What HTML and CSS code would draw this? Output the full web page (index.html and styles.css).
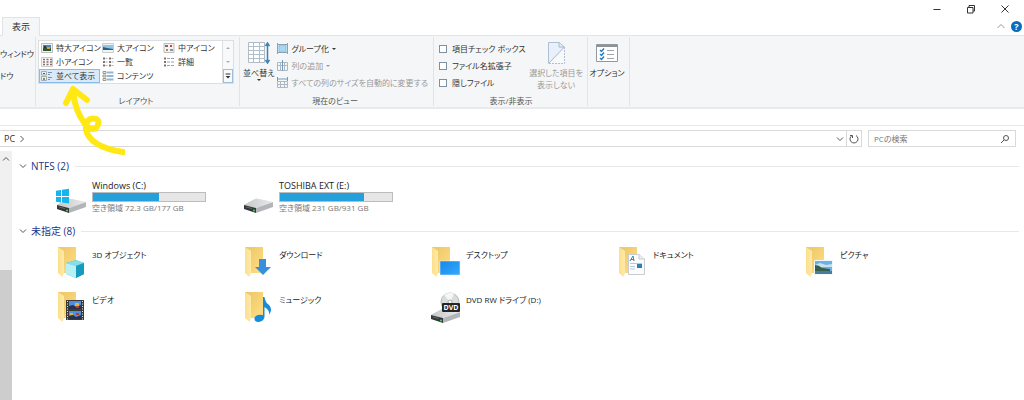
FILE: index.html
```html
<!DOCTYPE html>
<html lang="ja">
<head>
<meta charset="utf-8">
<title>PC</title>
<link rel="stylesheet" href="styles.css">
</head>
<body>
<svg class="defs" aria-hidden="true">
  <defs>
    <linearGradient id="flap" x1="0" x2="1"><stop offset="0" stop-color="#fbdf8c"/><stop offset="1" stop-color="#ffeaa9"/></linearGradient>
    <linearGradient id="back" x1="0" x2="1" y2="1"><stop offset="0" stop-color="#ecc566"/><stop offset="1" stop-color="#ffdf83"/></linearGradient>
    <linearGradient id="metal" x1="0" x2="1"><stop offset="0" stop-color="#c6c7c9"/><stop offset="1" stop-color="#e9eaeb"/></linearGradient>
    <linearGradient id="blue" x1="0" x2="1" y2="1"><stop offset="0" stop-color="#1687e8"/><stop offset="1" stop-color="#35a9ff"/></linearGradient>
    <symbol id="folder" viewBox="0 0 32 34">
      <path d="M2 2H20V28H7Z" fill="url(#back)"/>
      <path d="M2 2 8 6V28L6.500 32 2 28Z" fill="url(#flap)"/>
    </symbol>
    <symbol id="drive" viewBox="0 0 32 16">
      <path d="M1 7 12 1Q13 .5 14 .8L30 4 19 10Z" fill="url(#metal)"/>
      <path d="M13 10 30 4V9L13 15Z" fill="#b4b5b8"/>
      <path d="M1 7 12 1Q13 .5 14 .8L30 4 13 10Z" fill="url(#metal)"/>
      <path d="M1 7 13 10V15L1 11Z" fill="#35383a"/>
      <path d="M3 9 9 10.500" stroke="#666" stroke-width="1"/>
      <circle cx="11" cy="12.500" r="1" fill="#4fd866"/>
    </symbol>
  </defs>
</svg>

<header class="titlebar">
  <button class="win" aria-label="最小化"><svg viewBox="0 0 10 10"><path d="M1.500 5.500H8.500"/></svg></button>
  <button class="win" aria-label="元に戻す"><svg viewBox="0 0 10 10"><path d="M1.500 3.500H7V9H1.500ZM3 3.500V1.500H8.500V7H7"/></svg></button>
  <button class="win" aria-label="閉じる"><svg viewBox="0 0 10 10"><path d="M1.500 1.500 8.500 8.500M8.500 1.500 1.500 8.500"/></svg></button>
</header>

<nav class="tabs">
  <button class="tab">表示</button>
  <button class="collapse" aria-label="リボンの最小化"><svg viewBox="0 0 10 10"><path d="M1.500 7 5 3.500 8.500 7"/></svg></button>
  <button class="help" aria-label="ヘルプ">?</button>
</nav>

<section class="ribbon">
  <div class="group panes">
    <button class="pane-btn wide">ウィンドウ</button>
    <button class="pane-btn">ドウ</button>
  </div>

  <div class="group">
    <div class="gallery">
      <div class="views">
        <button class="view"><svg viewBox="0 0 12 10"><path d="M.5.5H11.500V9.500H.5Z" fill="#f3f3f3" stroke="#b9bcc0"/><path d="M2 2H10V8H2Z" fill="#4c83b6"/><path d="M2 5 5 4 7 6 10 5V8H2Z" fill="#31552f"/><path d="M3 3H5V5H3Z" fill="#333"/><path d="M6 4H9V6H6Z" fill="#d8a126"/></svg>特大アイコン</button>
        <button class="view"><svg viewBox="0 0 12 10"><path d="M.5.5H11.500V9.500H.5Z" fill="#f3f3f3" stroke="#c9ccd0"/><path d="M1 2H11V7H1Z" fill="#8fc4e6"/><path d="M1 4 5 5 11 6V7H1Z" fill="#1f6387"/></svg>大アイコン</button>
        <button class="view"><svg viewBox="0 0 12 10"><path d="M1 .5H11V9.500H1Z" fill="#f3f3f3" stroke="#b9bcc0"/><path d="M2 2H5V4H2Z" fill="#68727c"/><path d="M7 2H9V4H7Z" fill="#c44a36"/><path d="M3 6H5V8H3Z" fill="#bd8a35"/><path d="M7 6H10V8H7Z" fill="#8b9299"/></svg>中アイコン</button>
        <button class="view"><svg viewBox="0 0 12 10"><path d="M.5.5H11.500V9.500H.5Z" fill="#f6f6f6" stroke="#c9ccd0"/><path d="M2 2.500H11M2 5H11M2 7.500H11" stroke="#8c6f67" stroke-width="1.500" stroke-dasharray="2 1.500"/></svg>小アイコン</button>
        <button class="view"><svg viewBox="0 0 12 10"><path d="M1 1.500H3M1 5H3M1 8.500H3M7 1.500H9M7 5H9M7 8.500H9" stroke="#85726c" stroke-width="2"/><path d="M3.500 1.500H5.500M3.500 5H5.500M3.500 8.500H5.500M9.500 1.500H11.500M9.500 5H11.500M9.500 8.500H11.500" stroke="#a9b3bb"/></svg>一覧</button>
        <button class="view"><svg viewBox="0 0 12 10"><path d="M1 1.500H3M1 5H3M1 8.500H3" stroke="#85726c" stroke-width="2"/><path d="M4 1.500H7M8 1.500H11M4 5H7M8 5H11M4 8.500H7M8 8.500H11" stroke="#98a3ab"/></svg>詳細</button>
        <button class="view selected"><svg viewBox="0 0 12 10"><path d="M.5.5H5.500V4H.5ZM.5 5.500H5.500V9.500H.5Z" fill="#eee" stroke="#a4adb5"/><path d="M2 2H4V3H2Z" fill="#2d6d9c"/><path d="M2 7H4V9H2Z" fill="#7d9a37"/><path d="M7 1.500H11M7 3.500H9M7 6.500H11M7 8.500H9" stroke="#7796ae"/></svg>並べて表示</button>
        <button class="view"><svg viewBox="0 0 12 10"><path d="M1 .5H4V2.500H1ZM1 4H4V6H1ZM1 7.500H4V9.500H1Z" fill="#eee" stroke="#9a9a91"/><path d="M5 1.500H11.500M5 5H11.500M5 8.500H11.500" stroke="#8fb8d5" stroke-width="2"/></svg>コンテンツ</button>
      </div>
      <div class="scroller">
        <button aria-label="上へ"><svg viewBox="0 0 10 10"><path d="M3 6 5 4 7 6Z" fill="#a9adb3"/></svg></button>
        <button aria-label="下へ"><svg viewBox="0 0 10 10"><path d="M3 4 5 6 7 4Z" fill="#a9adb3"/></svg></button>
        <button class="more" aria-label="その他"><svg viewBox="0 0 10 10"><path d="M2 2H8V3H2ZM2 5H8L5 8Z" fill="#333"/></svg></button>
      </div>
    </div>
    <p class="caption">レイアウト</p>
  </div>

  <div class="group current">
    <div class="tools">
      <button class="big sort"><svg viewBox="0 0 22 22"><path d="M.5.5H16.500V20.500H.5Z" fill="#fff" stroke="#b3bac1"/><path d="M1 4.500H16M1 8.500H16M1 12.500H16M1 16.500H16M5.500 1V20M11.500 1V20" stroke="#b0bfcc"/><path d="M19.500 2V20M17.500 4 19.500 1 21.500 4M17.500 18 19.500 21 21.500 18" fill="none" stroke="#3e84b7" stroke-width="1.500"/></svg>並べ替え<span class="drop"></span></button>
      <div class="lines">
        <button class="line"><svg viewBox="0 0 11 11"><path d="M2 2H9V9H2Z" fill="#a7d7f4" stroke="#86bfe2"/><path d="M.5 0V11M10.500 0V11M1 1.500H10M1 9.500H10" fill="none" stroke="#8ea2b1"/></svg>グループ化<span class="drop"></span></button>
        <button class="line" disabled><svg viewBox="0 0 11 11"><path d="M.5 2.500H10.500V10.500H.5ZM3.500 2.500V10.500M7.500 2.500V10.500M.5 5.500H10.500" fill="#f4f6f9" stroke="#acb9c5"/><path d="M5.500 0V11" stroke="#7798ba"/></svg>列の追加<span class="drop"></span></button>
        <button class="line" disabled><svg viewBox="0 0 11 11"><path d="M.5 4.500H10.500V10.500H.5ZM3.500 4.500V10.500M7.500 4.500V10.500M.5 7.500H10.500" fill="#f4f6f9" stroke="#acb9c5"/><path d="M.5 0V4M10.500 0V4M1 2H10" stroke="#7798ba"/></svg>すべての列のサイズを自動的に変更する</button>
      </div>
    </div>
    <p class="caption">現在のビュー</p>
  </div>

  <div class="group show">
    <div class="tools">
      <div class="lines">
        <label class="line"><input type="checkbox">項目チェック ボックス</label>
        <label class="line"><input type="checkbox">ファイル名拡張子</label>
        <label class="line"><input type="checkbox">隠しファイル</label>
      </div>
      <button class="big hide" disabled><svg viewBox="0 0 22 22"><path d="M3.500.5H14L19.500 5V21.500H3.500Z" fill="#e8f0fb"/><path d="M3.500 21V.5H14L19.500 5" fill="none" stroke="#b1bfd6"/><path d="M19.500 5V21.500H3.500" fill="#f8f9fb" stroke="#b1bfd6" stroke-dasharray="2 1"/><path d="M14 .5V5H19.500M3.500 21.500 19.500 5" fill="none" stroke="#a7b8d1"/></svg>選択した項目を<br>表示しない</button>
    </div>
    <p class="caption">表示/非表示</p>
  </div>

  <div class="group">
    <button class="big options"><svg viewBox="0 0 22 22"><path d="M.5 2.500H21.500V19.500H.5Z" fill="#fff" stroke="#92989e"/><path d="M1 3H21V5H1Z" fill="#8d9499"/><path d="M4 8 5.500 9.500 8 6.500M4 12 5.500 13.500 8 10.500M4 16 5.500 17.500 8 14.500" fill="none" stroke="#277dc0" stroke-width="1.500"/><path d="M11 8.500H18M11 12.500H18M11 16.500H18" stroke="#a0a5aa"/></svg>オプション</button>
  </div>
</section>

<section class="address">
  <div class="path">
    <a class="crumb" href="#">PC</a>
    <svg class="glyph" viewBox="0 0 10 10"><path d="M3.500 2 6.500 5 3.500 8"/></svg>
    <button class="history" aria-label="履歴"><svg class="glyph" viewBox="0 0 10 10"><path d="M2 3.500 5 6.500 8 3.500"/></svg></button>
    <button class="refresh" aria-label="更新"><svg class="glyph" viewBox="0 0 10 10"><path d="M3 1.500A4 4 0 1 0 7 1.500M1 1.500H3.500V4"/></svg></button>
  </div>
  <div class="search">
    <input type="search" placeholder="PCの検索" aria-label="PCの検索">
    <svg class="glyph" viewBox="0 0 10 10"><circle cx="6" cy="4" r="2.500"/><path d="M4 6 1 9"/></svg>
  </div>
</section>

<div class="body">
  <div class="scrollbar"><svg class="glyph" viewBox="0 0 10 10"><path d="M2 6.500 5 3.500 8 6.500"/></svg><div class="thumb"></div></div>
  <main class="content">
    <h2 class="heading"><svg class="glyph" viewBox="0 0 10 10"><path d="M2 3.500 5 6.500 8 3.500"/></svg>NTFS (2)</h2>
    <div class="tiles drives">
      <div class="tile">
        <svg class="icon" viewBox="0 0 32 34"><use href="#drive" y="18" width="32" height="16"/><path d="M0 10.800 5 10V16H0ZM6 9.800 13 8.800V16H6ZM0 17H5V22.500L0 21.800ZM6 17H13V23.500L6 22.600Z" fill="#16b5ee"/></svg>
        <div class="info"><label for="c">Windows (C:)</label><progress id="c" max="1000" value="586"></progress><small>空き領域 72.3 GB/177 GB</small></div>
      </div>
      <div class="tile">
        <svg class="icon" viewBox="0 0 32 34"><use href="#drive" y="18" width="32" height="16"/></svg>
        <div class="info"><label for="e">TOSHIBA EXT (E:)</label><progress id="e" max="1000" value="750"></progress><small>空き領域 231 GB/931 GB</small></div>
      </div>
    </div>

    <h2 class="heading"><svg class="glyph" viewBox="0 0 10 10"><path d="M2 3.500 5 6.500 8 3.500"/></svg>未指定 (8)</h2>
    <div class="tiles">
      <div class="tile"><svg class="icon" viewBox="0 0 32 34"><use href="#folder" width="32" height="34"/><path d="M10 18 20 15 28 18V29L20 33 10 29Z" fill="#31b5d1"/><path d="M10 18 20 15 28 18 20 21Z" fill="#88dce9"/><path d="M10 18 20 21V33L10 29Z" fill="#b7f1f6"/><path d="M20 21 28 18V29L20 33Z" fill="#159bbd"/></svg><span class="name">3D オブジェクト</span></div>
      <div class="tile"><svg class="icon" viewBox="0 0 32 34"><use href="#folder" width="32" height="34"/><path d="M16 14H23V22H28L20 30 12 22H16Z" fill="#388edf"/></svg><span class="name">ダウンロード</span></div>
      <div class="tile"><svg class="icon" viewBox="0 0 32 34"><use href="#folder" width="32" height="34"/><path d="M10 16H30V30H10Z" fill="url(#blue)" stroke="#eef7ff" stroke-width=".5"/></svg><span class="name">デスクトップ</span></div>
      <div class="tile"><svg class="icon" viewBox="0 0 32 34"><use href="#folder" width="32" height="34"/><path d="M11.500 9.500H22L27.500 14V29.500H11.500Z" fill="#fcfcfc" stroke="#c7cdd2"/><path d="M22 9.500V14H27.500" fill="#eee" stroke="#c7cdd2"/><path d="M13 16 16 11 17 16M14 14.500H17" fill="none" stroke="#3387b8"/><path d="M13 18.500H25M13 21.500H18M13 24H18" stroke="#b9cad6"/><path d="M20 19H25V23H20Z" fill="#2d7fb8"/></svg><span class="name">ドキュメント</span></div>
      <div class="tile"><svg class="icon" viewBox="0 0 32 34"><use href="#folder" width="32" height="34"/><path d="M10.500 15.500H28.500V29.500H10.500Z" fill="#6cb1e4" stroke="#f4f7f8"/><path d="M11 20 16 18 22 20 28 19V22H11Z" fill="#c7e2ee"/><path d="M11 20Q15 20 18 23L26 24V26H11Z" fill="#365f4c"/><path d="M11 26H28V29H11Z" fill="#477d9e"/></svg><span class="name">ピクチャ</span></div>
      <div class="tile"><svg class="icon" viewBox="0 0 32 34"><use href="#folder" width="32" height="34"/><path d="M10 10H28V30H10Z" fill="#3a3a3b"/><path d="M11.500 11V30M26.500 11V30" stroke="#e4e4e4" stroke-dasharray="1 1.500"/><path d="M13 11H25V19H13ZM13 21H25V29H13Z" fill="#4d90e3"/><path d="M13 16 17 15 20 17 25 15V19H13ZM13 26 17 25 20 27 25 25V29H13Z" fill="#28334a"/><path d="M19 13H23V16H19ZM14 23H17V25H14Z" fill="#d8b449"/><path d="M20 16H23V18H20ZM20 23H23V25H20Z" fill="#b83f37"/></svg><span class="name">ビデオ</span></div>
      <div class="tile"><svg class="icon" viewBox="0 0 32 34"><use href="#folder" width="32" height="34"/><path d="M20 7H21.500Q22 12 26 15 30 19 26 25 27 20 21.500 17V27Q21 31 16 32 11 32 11.500 28 13 24 20 25Z" fill="#148bdc"/></svg><span class="name">ミュージック</span></div>
      <div class="tile"><svg class="icon" viewBox="0 0 32 34"><circle cx="20" cy="12" r="9" fill="#d9dcdc" stroke="#b4b8ba"/><path d="M20 12 14 5Q20 1 24 4Z" fill="#f5f7f6"/><circle cx="20" cy="12" r="2" fill="#fff" stroke="#aaa"/><use href="#drive" y="18" width="32" height="16"/><rect x="12" y="13" width="18" height="9" rx="1" fill="#252525"/><text class="disc" x="21" y="20" text-anchor="middle">DVD</text></svg><span class="name">DVD RW ドライブ (D:)</span></div>
    </div>
  </main>
</div>

<svg class="arrow" viewBox="0 0 64 72" aria-hidden="true"><path d="M5 18 12 4 26 15M12 5C13 18 17 30 24 39Q29 46 35 43 40 36 35 34C28 32 24 37 25 45 28 57 42 64 62 67"/></svg>
</body>
</html>
```
FILE: styles.css
```css
* { box-sizing: border-box; }
body {
  margin: 0;
  min-height: 100vh;
  display: flex;
  flex-direction: column;
  background: #fff;
  color: #333;
  font: 9px/12px "Open Sans", "Noto Sans CJK JP", sans-serif;
  font-feature-settings: "palt";
  white-space: nowrap;
  overflow-x: hidden;
}
button, input {
  font: inherit;
  font-feature-settings: inherit;
  color: inherit;
  padding: 0;
  border: 0;
  background: none;
}
svg { flex: none; }
.defs { position: absolute; width: 0; height: 0; }

.titlebar { display: flex; justify-content: flex-end; gap: 24px; height: 17px; padding-right: 14px; }
.win { width: 10px; display: flex; align-items: center; }
.win svg, .collapse svg { width: 10px; height: 10px; fill: none; stroke: #333; }

.tabs { display: flex; align-items: center; height: 19px; padding: 0 2px; border-bottom: 1px solid #e2e3e4; }
.tab {
  width: 38px;
  height: 19px;
  margin: 0 auto -1px 0;
  border: 1px solid #e2e3e4;
  border-bottom: 0;
  background: #f5f6f7;
}
.collapse { display: flex; margin-right: 5px; }
.collapse svg { stroke: #999; }
.help { width: 11px; height: 11px; border-radius: 50%; background: #0a6cbd; color: #fff; font-weight: bold; line-height: 11px; }

.ribbon { display: flex; height: 73px; padding-top: 1px; background: #f5f6f7; border-bottom: 2px solid #e9eaeb; font-size: 8px; }
.group { display: flex; flex-direction: column; margin-bottom: 1px; padding: 3px 5px 0 2px; border-right: 1px solid #e2e3e4; }
.panes { width: 36px; padding: 11px 0 0; align-items: flex-start; gap: 10px; }
.pane-btn { min-width: 13px; text-align: right; }
.wide { min-width: 29px; }
.caption { margin: auto 0 0; line-height: 10px; text-align: center; color: #555; }

.gallery { display: flex; height: 44px; border: 1px solid #dcdfe2; background: #fff; }
.views { display: grid; grid-template-columns: repeat(3, 61px); grid-auto-rows: 14px; }
.view { display: flex; align-items: center; gap: 3px; padding-left: 2px; }
.view svg { width: 12px; height: 10px; }
.selected { background: #d9eafa; outline: 1px solid #8abbe5; outline-offset: -1px; }
.scroller { width: 11px; display: grid; grid-auto-rows: 14px; border-left: 1px solid #dcdfe2; background: #f8f9fa; }
.scroller button { display: flex; align-items: center; }
.scroller svg { width: 10px; height: 10px; }
.scroller .more { border: 1px solid #9dbfdc; }
.scroller .more svg { width: 8px; }

.tools { display: flex; }
.lines { display: grid; grid-auto-rows: 17px; }
.line { display: flex; align-items: center; gap: 3px; }
.line svg { width: 11px; height: 11px; }
.line input { appearance: none; width: 8px; height: 8px; margin: 0 2px 0 0; border: 1px solid #8090a0; background: #fff; }
button:disabled { color: #999; }
.drop { border: 2px solid transparent; border-top-color: currentColor; border-bottom: 0; }
.big { display: flex; flex-direction: column; align-items: center; }
.big svg { width: 22px; height: 22px; margin: 2px 0 3px; }
.current { width: 194px; }
.sort { width: 34px; margin-right: 2px; }
.show { width: 154px; padding-left: 5px; padding-right: 4px; }
.hide { margin-left: auto; }
.options { width: 34px; }

.address { display: flex; gap: 6px; margin-top: 16px; padding: 4px 8px 5px 0; border-top: 1px solid #e8e8e8; }
.path, .search { display: flex; align-items: center; height: 17px; border: 1px solid #d9d9d9; background: #fff; }
.path { flex: 1; border-left: 0; padding-left: 4px; }
.crumb { color: inherit; text-decoration: none; margin-right: 2px; }
.glyph { width: 10px; height: 10px; fill: none; stroke: #555; }
.history { display: flex; margin-left: auto; margin-right: 1px; }
.refresh { display: flex; align-items: center; justify-content: center; width: 15px; height: 15px; border-left: 1px solid #d9d9d9; }
.search { width: 148px; padding: 0 5px; }
.search input { flex: 1; min-width: 0; outline: 0; appearance: none; font-size: 8px; }
.search input::placeholder { color: #777; }

.body { display: flex; flex: 1; }
.scrollbar { width: 12px; display: flex; flex-direction: column; align-items: center; margin-top: -1px; padding-top: 3px; background: #f0f0f0; }
.thumb { align-self: stretch; flex: 1; margin-top: 106px; background: #cdcdcd; }
.content { flex: 1; min-width: 0; padding: 6px 5px 8px 6px; }
.heading { display: flex; align-items: center; gap: 3px; margin: 0; color: #1e3287; font-size: 10px; line-height: 16px; font-weight: normal; }
.heading::after { content: ""; flex: 1; margin-left: 3px; border-top: 1px solid #e8e8e8; }
.tiles { display: grid; grid-template-columns: repeat(auto-fill, 187px); grid-auto-rows: 34px; row-gap: 11px; padding: 6px 0 0 38px; color: #222; }
.drives { margin-bottom: 9px; }
.tile { display: flex; gap: 4px; }
.icon { width: 32px; height: 34px; }
.info { display: flex; flex-direction: column; }
.name { padding-top: 4px; font-size: 8px; }
progress { appearance: none; display: block; width: 114px; height: 11px; border: 1px solid #bcbcbc; background: #e6e6e6; }
progress::-webkit-progress-bar { background: #e6e6e6; }
progress::-webkit-progress-value { background: #26a0da; }
small { font-size: 8px; color: #777; }
.disc { font: bold 7px/8px "Open Sans", sans-serif; fill: #fff; }

.arrow { position: absolute; left: 61px; top: 85px; width: 64px; height: 72px; fill: none; stroke: #ffe813; stroke-width: 6; stroke-linecap: round; stroke-linejoin: round; pointer-events: none; }
```
